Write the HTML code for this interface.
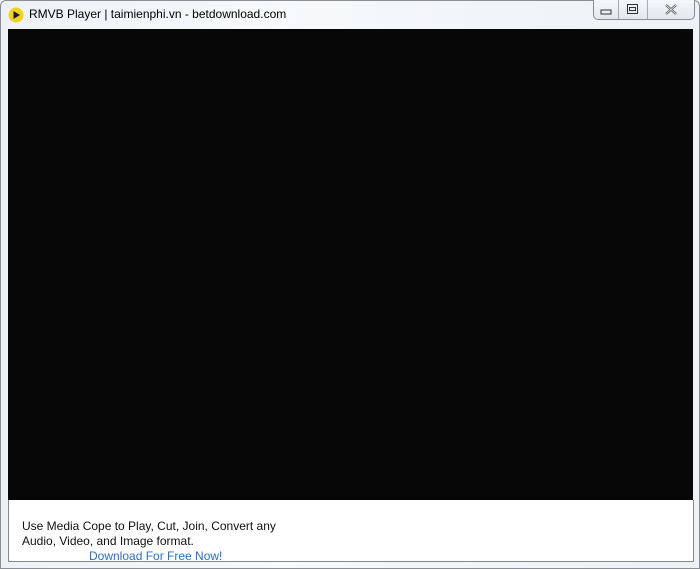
<!DOCTYPE html>
<html><head><meta charset="utf-8"><style>
html,body{margin:0;padding:0;}
body{width:700px;height:569px;position:relative;overflow:hidden;background:#f0f3f6;font-family:"Liberation Sans",Arial,sans-serif;}
.frame{position:absolute;left:0;top:0;width:698px;height:567px;border:1px solid #8a8f96;border-radius:6px 6px 0 0;background:linear-gradient(90deg,#eef2f6,#f7f9fb 40%,#edf1f5);}
.title{position:absolute;left:29px;top:7px;font-size:12px;color:#000;}
.icon{position:absolute;left:8px;top:7px;}
.btns{position:absolute;left:593px;top:0;height:19px;width:100px;border:1px solid #8a8f96;border-top:none;border-radius:0 0 5px 5px;background:linear-gradient(#f6f8fa,#e3e8ee);}
.btns div{position:absolute;top:0;height:19px;border-right:1px solid #a6abb2;}
.video{position:absolute;left:8px;top:29px;width:685px;height:471px;background:#070707;}
.panel{position:absolute;left:8px;top:500px;width:684px;height:61px;background:#fff;border-right:1px solid #888;border-bottom:1px solid #888;border-left:1px solid #888;}
.t{position:absolute;left:22px;font-size:12px;color:#111;}
.lnk{position:absolute;left:89px;top:549px;font-size:12px;color:#2a6fc9;}
</style></head><body>
<div class="frame"></div>
<svg class="icon" width="16" height="16" viewBox="0 0 16 16"><circle cx="8" cy="8" r="7.5" fill="#f2d21a"/><path d="M5.5 4 L12 8 L5.5 12 Z" fill="#1a1a40"/></svg>
<div class="title">RMVB Player | taimienphi.vn - betdownload.com</div>
<div class="btns">
<div style="left:0;width:24px"><svg width="24" height="19"><rect x="7" y="10" width="10" height="4" fill="none" stroke="#333" stroke-width="1"/></svg></div>
<div style="left:25px;width:28px"><svg width="28" height="19"><rect x="8.5" y="4.5" width="10" height="9" fill="none" stroke="#333"/><rect x="10.5" y="7.5" width="6" height="3" fill="none" stroke="#333"/></svg></div>
<div style="left:54px;width:46px;border:none"><svg width="46" height="19"><path d="M18 5 L28 14 M28 5 L18 14" stroke="#555" stroke-width="2.2"/><path d="M18 5 L28 14 M28 5 L18 14" stroke="#fff" stroke-width="0.7"/></svg></div>
</div>
<div class="video"></div>
<div class="panel"></div>
<div class="t" style="top:519px">Use Media Cope to Play, Cut, Join, Convert any</div>
<div class="t" style="top:534px">Audio, Video, and Image format.</div>
<div class="lnk">Download For Free Now!</div>
</body></html>
